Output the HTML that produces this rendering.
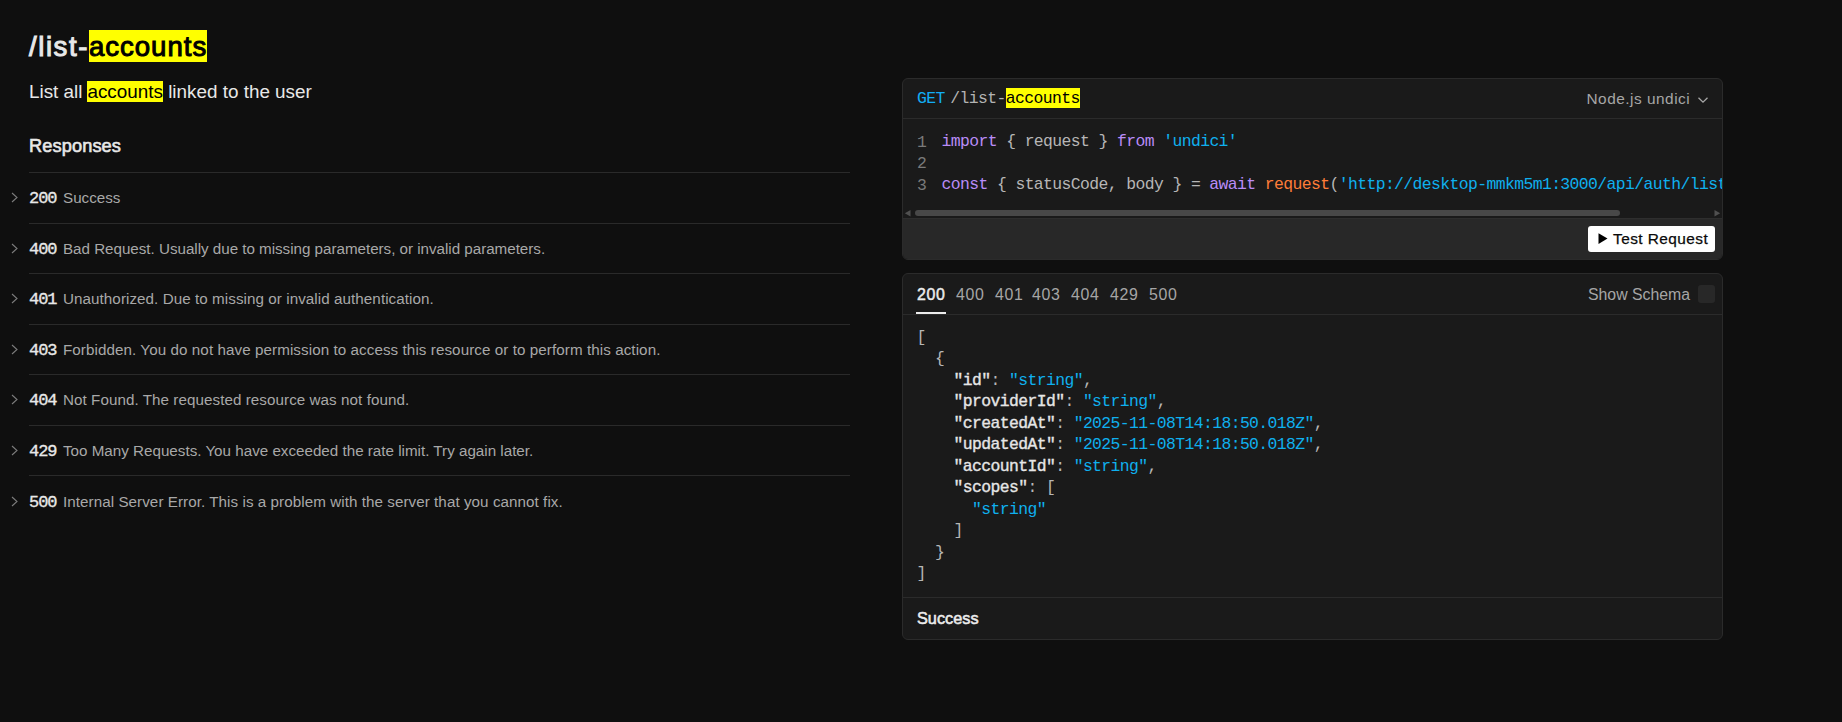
<!DOCTYPE html>
<html><head><meta charset="utf-8">
<style>
*{margin:0;padding:0;box-sizing:border-box}
html,body{width:1842px;height:722px;overflow:hidden;background:#0f0f0f;color:#e8e8e8;font-family:"Liberation Sans",sans-serif}
.abs{position:absolute;white-space:pre}
.mono{font-family:"Liberation Mono",monospace}
mark{background:#ffff00;color:#000}
#h1{left:29px;top:29px;font-size:27.6px;font-weight:400;-webkit-text-stroke:1px #e8e8e8;line-height:36px;color:#e8e8e8}
#desc{left:29px;top:80px;font-size:18.86px;line-height:24px;color:#e8e8e8}
#resp{left:29px;top:133.7px;font-size:18.2px;font-weight:400;-webkit-text-stroke:0.6px #e8e8e8;letter-spacing:0.12px;line-height:24px;color:#e8e8e8}
.hr{position:absolute;left:29px;width:821px;height:1px;background:#2a2a2a}
.row{position:absolute;left:0;width:850px;height:24px}
.chev{position:absolute;left:10.4px;top:4.2px}
.code{position:absolute;left:29px;top:0;font-family:"Liberation Mono",monospace;font-weight:400;-webkit-text-stroke:0.35px #e8e8e8;font-size:17px;letter-spacing:-1.05px;line-height:23px;color:#e8e8e8}
.rdesc{position:absolute;left:63px;top:-1px;font-size:15.2px;line-height:24px;color:#a8a8a8;white-space:pre}
.lnum{font-size:16.4px;line-height:21.5px;color:#7a7a7a}
.cl{font-size:16.4px;letter-spacing:-0.6px;line-height:21.5px;color:#b6b6b6}
.kw{color:#b98cf7}
.st{color:#0fb0ee}
.fn{color:#ff7d38}
.k{color:#e6e6e6;-webkit-text-stroke:0.35px #e6e6e6}
.tab{top:11px;font-size:15.9px;letter-spacing:0.6px;line-height:20px;color:#a6a6a6}
.card{position:absolute;left:902px;width:821px;background:#1a1a1a;border:1px solid #2b2b2b;border-radius:6px;overflow:hidden}
</style></head><body>
<div id="h1" class="abs"><span style="letter-spacing:1.55px">/list-</span><mark style="letter-spacing:0.98px;padding:1px 0 0.3px 0;-webkit-text-stroke:1px #000">accounts</mark></div>
<div id="desc" class="abs">List all<mark style="margin-left:4.9px;padding-left:0.1px">accounts</mark> linked to the user</div>
<div id="resp" class="abs">Responses</div>

<div class="hr" style="top:172px"></div>
<div class="row" style="top:187px"><svg class="chev" width="9" height="13" viewBox="0 0 9 13"><path d="M2 2 L7 6.5 L2 11" fill="none" stroke="#7c7c7c" stroke-width="1.1"/></svg><span class="code">200</span><span class="rdesc">Success</span></div>
<div class="hr" style="top:223px"></div>
<div class="row" style="top:238px"><svg class="chev" width="9" height="13" viewBox="0 0 9 13"><path d="M2 2 L7 6.5 L2 11" fill="none" stroke="#7c7c7c" stroke-width="1.1"/></svg><span class="code">400</span><span class="rdesc" style="letter-spacing:-0.023px">Bad Request. Usually due to missing parameters, or invalid parameters.</span></div>
<div class="hr" style="top:273px"></div>
<div class="row" style="top:288px"><svg class="chev" width="9" height="13" viewBox="0 0 9 13"><path d="M2 2 L7 6.5 L2 11" fill="none" stroke="#7c7c7c" stroke-width="1.1"/></svg><span class="code">401</span><span class="rdesc" style="letter-spacing:0.065px">Unauthorized. Due to missing or invalid authentication.</span></div>
<div class="hr" style="top:324px"></div>
<div class="row" style="top:339px"><svg class="chev" width="9" height="13" viewBox="0 0 9 13"><path d="M2 2 L7 6.5 L2 11" fill="none" stroke="#7c7c7c" stroke-width="1.1"/></svg><span class="code">403</span><span class="rdesc" style="letter-spacing:0.074px">Forbidden. You do not have permission to access this resource or to perform this action.</span></div>
<div class="hr" style="top:374px"></div>
<div class="row" style="top:389px"><svg class="chev" width="9" height="13" viewBox="0 0 9 13"><path d="M2 2 L7 6.5 L2 11" fill="none" stroke="#7c7c7c" stroke-width="1.1"/></svg><span class="code">404</span><span class="rdesc" style="letter-spacing:0.06px">Not Found. The requested resource was not found.</span></div>
<div class="hr" style="top:425px"></div>
<div class="row" style="top:440px"><svg class="chev" width="9" height="13" viewBox="0 0 9 13"><path d="M2 2 L7 6.5 L2 11" fill="none" stroke="#7c7c7c" stroke-width="1.1"/></svg><span class="code">429</span><span class="rdesc">Too Many Requests. You have exceeded the rate limit. Try again later.</span></div>
<div class="hr" style="top:475px"></div>
<div class="row" style="top:491px"><svg class="chev" width="9" height="13" viewBox="0 0 9 13"><path d="M2 2 L7 6.5 L2 11" fill="none" stroke="#7c7c7c" stroke-width="1.1"/></svg><span class="code">500</span><span class="rdesc" style="letter-spacing:0.059px">Internal Server Error. This is a problem with the server that you cannot fix.</span></div>

<!-- card 1 -->
<div class="card" style="top:78px;height:182px">
  <div class="chd" style="height:40px;border-bottom:1px solid #2b2b2b"></div>
  <div class="abs mono" style="left:14px;top:9.5px;font-size:16.4px;letter-spacing:-0.6px;line-height:20px;color:#b3b3b3"><span style="color:#12adf5">GET</span><span style="margin-left:5.6px">/list-</span><mark class="m2" style="padding:0.8px 0 0.8px">accounts</mark></div>
  <div id="node" class="abs" style="left:683.5px;top:10.3px;font-size:15.4px;letter-spacing:0.5px;line-height:20px;color:#a6a6a6">Node.js undici</div>
  <svg style="position:absolute;left:793.5px;top:16.5px" width="12" height="8" viewBox="0 0 12 8"><path d="M1.5 1.8 L6 6.2 L10.5 1.8" fill="none" stroke="#a6a6a6" stroke-width="1.3"/></svg>
  <div class="abs mono lnum" style="left:14px;top:52.5px">1<br>2<br>3</div>
  <div class="abs mono cl" style="left:38.5px;top:52.3px"><span class="kw">import</span> { request } <span class="kw">from</span> <span class="st">'undici'</span>

<span class="kw">const</span> { statusCode, body } = <span class="kw">await</span> <span class="fn">request</span>(<span class="st">'http://desktop-mmkm5m1:3000/api/auth/list-accounts', {</span></div>
  <div style="position:absolute;left:0;top:139px;width:819px;height:1px;background:#2e2e2e"></div>
  <div style="position:absolute;left:0;top:140px;width:819px;height:41px;background:#282828"></div>
  <svg style="position:absolute;left:1.2px;top:131px" width="7" height="7" viewBox="0 0 7 7"><path d="M6.5 0 L0.8 3.2 L6.5 6.4Z" fill="#505050"/></svg>
  <div style="position:absolute;left:12px;top:131px;width:705px;height:6px;border-radius:3px;background:#484848"></div>
  <svg style="position:absolute;left:811px;top:131px" width="7" height="7" viewBox="0 0 7 7"><path d="M0.5 0 L6.2 3.2 L0.5 6.4Z" fill="#505050"/></svg>
  <div class="btn" style="position:absolute;left:685px;top:147px;width:127px;height:26px;background:#fff;border-radius:3px"></div>
  <svg style="position:absolute;left:695px;top:154px" width="10" height="12" viewBox="0 0 10 12"><path d="M0.5 0.3 L9.5 5.6 L0.5 10.9Z" fill="#000"/></svg>
  <div id="treq" class="abs" style="left:710px;top:149.5px;font-size:15.4px;letter-spacing:0.45px;-webkit-text-stroke:0.25px #0a0a0a;line-height:20px;color:#0a0a0a">Test Request</div>
</div>
<!-- card 2 -->
<div class="card" style="top:273px;height:367px">
  <div style="height:41px;border-bottom:1px solid #2b2b2b"></div>
  <span class="abs tab" style="left:14px;color:#ececec;-webkit-text-stroke:0.45px #ececec">200</span><span class="abs tab" style="left:53px">400</span><span class="abs tab" style="left:92px">401</span><span class="abs tab" style="left:129px">403</span><span class="abs tab" style="left:168px">404</span><span class="abs tab" style="left:207px">429</span><span class="abs tab" style="left:246px">500</span>
  <div style="position:absolute;left:13px;top:38px;width:30px;height:2px;background:#ececec"></div>
  <div id="schema" class="abs" style="left:685px;top:10.5px;font-size:15.84px;line-height:20px;color:#a6a6a6">Show Schema</div>
  <div style="position:absolute;left:795px;top:11px;width:17px;height:18px;border-radius:3px;background:#282828"></div>
  <div class="abs mono cl" style="left:13.6px;top:52.5px">[
  {
    <span class="k">"id"</span>: <span class="st">"string"</span>,
    <span class="k">"providerId"</span>: <span class="st">"string"</span>,
    <span class="k">"createdAt"</span>: <span class="st">"2025-11-08T14:18:50.018Z"</span>,
    <span class="k">"updatedAt"</span>: <span class="st">"2025-11-08T14:18:50.018Z"</span>,
    <span class="k">"accountId"</span>: <span class="st">"string"</span>,
    <span class="k">"scopes"</span>: [
      <span class="st">"string"</span>
    ]
  }
]</div>
  <div style="position:absolute;left:0;top:323px;width:819px;height:1px;background:#2b2b2b"></div>
  <div id="succ" class="abs" style="left:14px;top:334px;font-size:16.3px;font-weight:400;-webkit-text-stroke:0.55px #ececec;line-height:20px;color:#ececec">Success</div>
</div>
</body></html>
